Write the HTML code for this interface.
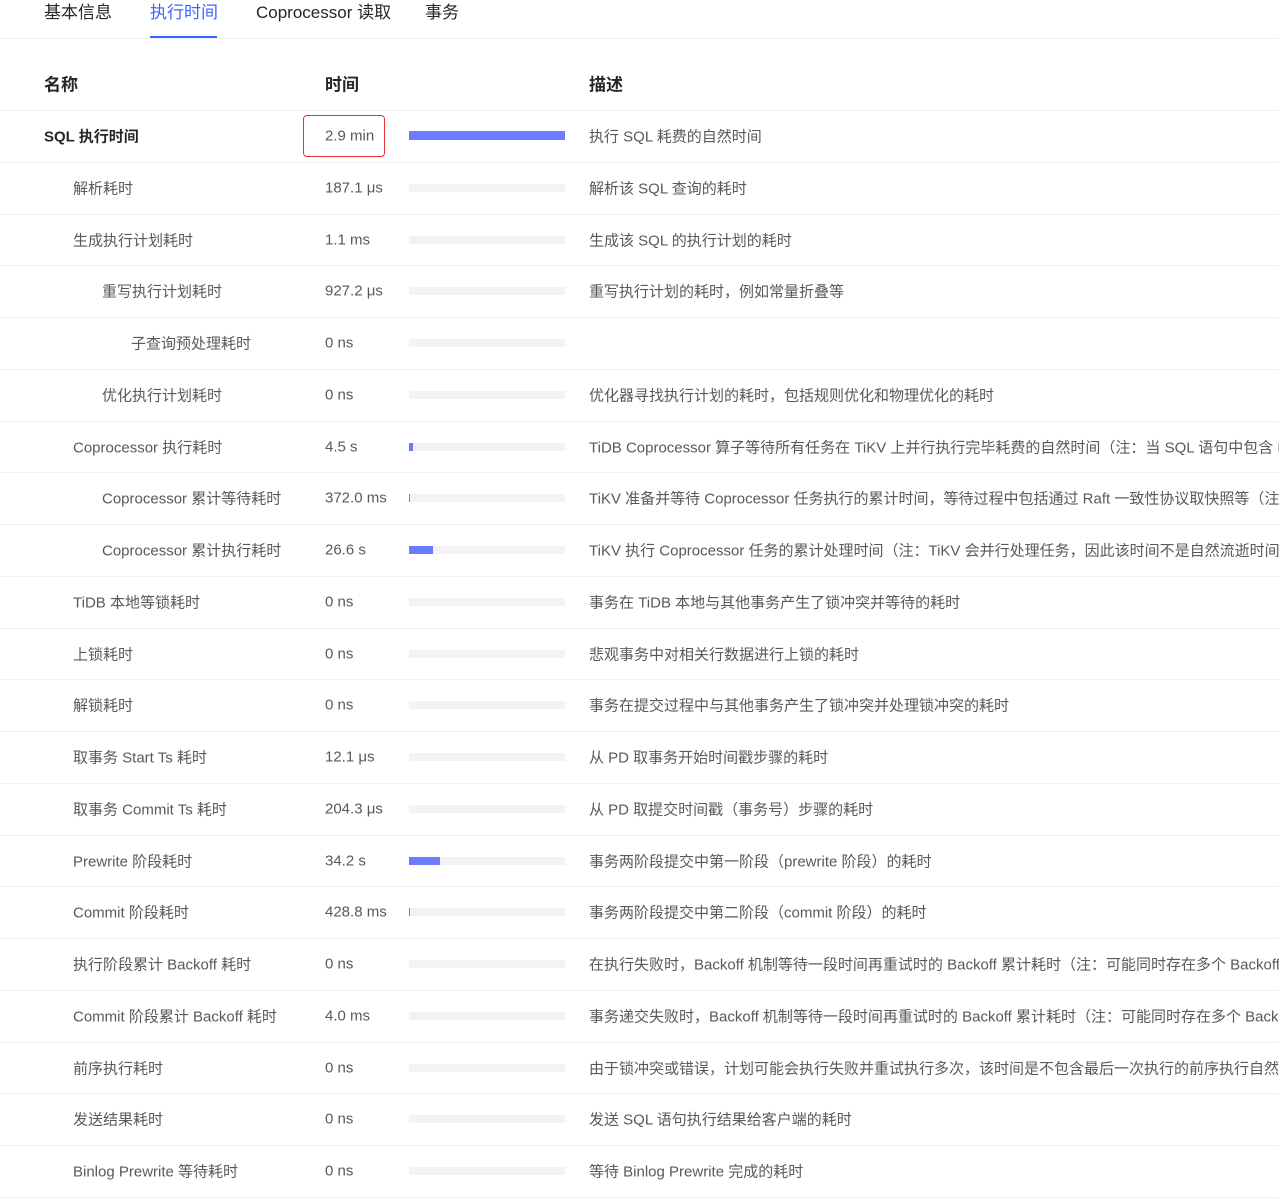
<!DOCTYPE html>
<html><head><meta charset="utf-8"><style>
body{margin:0;width:1279px;height:1201px;overflow:hidden;background:#fff;font-family:"Liberation Sans","Noto Sans CJK SC",sans-serif;font-size:15px;color:#595959;position:relative}
.t{position:absolute;top:-2px;font-size:17px;color:#262626;white-space:nowrap}
.l{position:absolute;left:0;width:1279px;height:1px;background:#efefef}
.r{position:absolute;left:0;width:1279px;height:52px;white-space:nowrap;overflow:hidden}
.r span{position:absolute;top:50%;transform:translateY(-50%)}
.v{left:325px}
.d{left:589px}
.g{position:absolute;left:409px;width:156px;height:8px;top:22px;background:#f3f3f4}
.b{position:absolute;left:0;top:0;height:8px;background:#6b7cff}
.h{font-weight:bold;color:#262626;font-size:17px}
</style></head><body>
<div class="t" style="left:44px">基本信息</div>
<div class="t" style="left:150px;color:#3c64ff">执行时间</div>
<div class="t" style="left:256px">Coprocessor 读取</div>
<div class="t" style="left:425px">事务</div>
<div style="position:absolute;left:150px;top:36px;width:67px;height:2px;background:#3c64ff"></div>
<div class="l" style="top:38px"></div>
<div class="r" style="top:57px"><span class="h" style="left:44px">名称</span><span class="h" style="left:325px">时间</span><span class="h" style="left:589px">描述</span></div>
<div class="l" style="top:110px"></div>
<div id="rows"></div>
<div style="position:absolute;left:303px;top:115px;width:80px;height:40px;border:1.5px solid #e53030;border-radius:4px"></div>
<script>
var R=[
[44,"SQL 执行时间","2.9 min",156,"执行 SQL 耗费的自然时间",1],
[73,"解析耗时","187.1 μs",0,"解析该 SQL 查询的耗时"],
[73,"生成执行计划耗时","1.1 ms",0,"生成该 SQL 的执行计划的耗时"],
[102,"重写执行计划耗时","927.2 μs",0,"重写执行计划的耗时，例如常量折叠等"],
[131,"子查询预处理耗时","0 ns",0,""],
[102,"优化执行计划耗时","0 ns",0,"优化器寻找执行计划的耗时，包括规则优化和物理优化的耗时"],
[73,"Coprocessor 执行耗时","4.5 s",4,"TiDB Coprocessor 算子等待所有任务在 TiKV 上并行执行完毕耗费的自然时间（注：当 SQL 语句中包含 LIMIT 时，部分任务可能不会被执行）"],
[102,"Coprocessor 累计等待耗时","372.0 ms",1,"TiKV 准备并等待 Coprocessor 任务执行的累计时间，等待过程中包括通过 Raft 一致性协议取快照等（注：TiKV 会并行等待任务）"],
[102,"Coprocessor 累计执行耗时","26.6 s",24,"TiKV 执行 Coprocessor 任务的累计处理时间（注：TiKV 会并行处理任务，因此该时间不是自然流逝时间）"],
[73,"TiDB 本地等锁耗时","0 ns",0,"事务在 TiDB 本地与其他事务产生了锁冲突并等待的耗时"],
[73,"上锁耗时","0 ns",0,"悲观事务中对相关行数据进行上锁的耗时"],
[73,"解锁耗时","0 ns",0,"事务在提交过程中与其他事务产生了锁冲突并处理锁冲突的耗时"],
[73,"取事务 Start Ts 耗时","12.1 μs",0,"从 PD 取事务开始时间戳步骤的耗时"],
[73,"取事务 Commit Ts 耗时","204.3 μs",0,"从 PD 取提交时间戳（事务号）步骤的耗时"],
[73,"Prewrite 阶段耗时","34.2 s",31,"事务两阶段提交中第一阶段（prewrite 阶段）的耗时"],
[73,"Commit 阶段耗时","428.8 ms",1,"事务两阶段提交中第二阶段（commit 阶段）的耗时"],
[73,"执行阶段累计 Backoff 耗时","0 ns",0,"在执行失败时，Backoff 机制等待一段时间再重试时的 Backoff 累计耗时（注：可能同时存在多个 Backoff）"],
[73,"Commit 阶段累计 Backoff 耗时","4.0 ms",0,"事务递交失败时，Backoff 机制等待一段时间再重试时的 Backoff 累计耗时（注：可能同时存在多个 Backoff）"],
[73,"前序执行耗时","0 ns",0,"由于锁冲突或错误，计划可能会执行失败并重试执行多次，该时间是不包含最后一次执行的前序执行自然耗时"],
[73,"发送结果耗时","0 ns",0,"发送 SQL 语句执行结果给客户端的耗时"],
[73,"Binlog Prewrite 等待耗时","0 ns",0,"等待 Binlog Prewrite 完成的耗时"]];
var h="";
R.forEach(function(x,i){var top=110+i*51.75;
h+='<div class="r" style="top:'+top+'px"><span style="left:'+x[0]+'px;'+(x[5]?'color:#262626;font-weight:bold':'')+'">'+x[1]+'</span><span class="v">'+x[2]+'</span><div class="g"><div class="b" style="width:'+x[3]+'px;'+(x[5]?'height:9px;top:-1px':'')+'"></div></div><span class="d">'+x[4]+'</span></div><div class="l" style="top:'+Math.round(top+51.75)+'px"></div>';});
document.getElementById("rows").outerHTML=h;
</script>
</body></html>
